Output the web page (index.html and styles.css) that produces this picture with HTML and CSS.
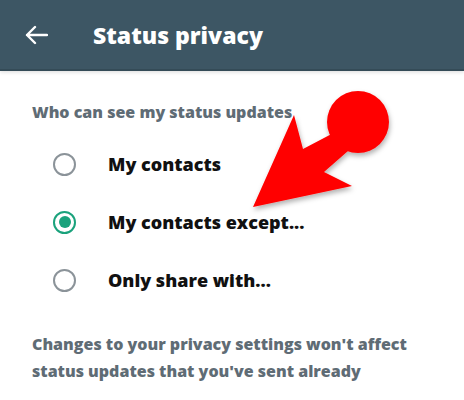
FILE: index.html
```html
<!DOCTYPE html>
<html lang="en">

<head>
    <meta charset="UTF-8">
    <meta name="viewport" content="width=device-width, initial-scale=1.0">
    <title>Status privacy</title>
    <link rel="stylesheet" href="styles.css">
</head>

<body>
    <!-- 顶部标题栏 -->
    <div class="topbar">
        <svg class="back" width="24" height="20" viewBox="0 0 24 20">
            <path d="M23 10H3M11 2L3 10l8 8" fill="none" stroke="#fff" stroke-width="2.4" stroke-linecap="round" stroke-linejoin="round"/>
        </svg>
        <span class="title">Status privacy</span>
    </div>

    <div class="content">
        <p class="label">Who can see my status updates</p>
        <ul class="options">
            <li><span class="radio"></span><span class="name">My contacts</span></li>
            <li><span class="radio checked"></span><span class="name">My contacts except...</span></li>
            <li><span class="radio"></span><span class="name">Only share with...</span></li>
        </ul>
        <p class="note">Changes to your privacy settings won't affect status updates that you've sent already</p>
    </div>

    <!-- 红色箭头 -->
    <svg class="pointer" width="464" height="400" viewBox="0 0 464 400">
        <defs>
            <filter id="shade" x="-20%" y="-20%" width="140%" height="140%">
                <feDropShadow dx="1" dy="3" stdDeviation="2.5" flood-color="#000" flood-opacity="0.3"/>
            </filter>
        </defs>
        <g fill="#ff0000" filter="url(#shade)">
            <circle cx="358" cy="122" r="31"/>
            <path d="M343 128 L356 144 L324 172 L352 186 L253 207 L294 115 L303 149 Z"/>
        </g>
    </svg>
</body>

</html>
```

FILE: styles.css
```css
* {
    margin: 0;
    padding: 0;
}

body {
    width: 464px;
    height: 400px;
    background-color: #fff;
    font-family: "Open Sans", "Noto Sans", sans-serif;
    position: relative;
    overflow: hidden;
}

/* 标题栏 */
.topbar {
    height: 69px;
    background-color: #3d5664;
    border-bottom: 2px solid #344b57;
    box-shadow: 0 1px 4px rgba(0, 0, 0, 0.15);
    display: flex;
    align-items: center;
    padding-left: 24px;
}

.back {
    margin-top: 1px;
}

.title {
    margin-left: 45px;
    color: #fff;
    font-size: 23px;
    font-weight: 800;
}

/* 内容 */
.content {
    padding: 30px 32px 0;
}

.label {
    color: #5f6c75;
    font-size: 16px;
    font-weight: 800;
    line-height: 22px;
}

.options {
    list-style: none;
    margin-top: 12px;
}

.options li {
    height: 58px;
    display: flex;
    align-items: center;
    padding-left: 21px;
}

.radio {
    width: 19px;
    height: 19px;
    border: 2.5px solid #8b9399;
    border-radius: 50%;
    display: flex;
    align-items: center;
    justify-content: center;
}

.radio.checked {
    border-color: #1aa27c;
}

.radio.checked::after {
    content: "";
    width: 12px;
    height: 12px;
    border-radius: 50%;
    background-color: #1aa27c;
}

.name {
    margin-left: 32px;
    color: #111;
    font-size: 18px;
    font-weight: 800;
}

.note {
    margin-top: 22px;
    color: #5f6c75;
    font-size: 16px;
    font-weight: 800;
    line-height: 27px;
    width: 400px;
}

/* 红色箭头，盖在内容上 */
.pointer {
    position: absolute;
    left: 0;
    top: 0;
}
```
